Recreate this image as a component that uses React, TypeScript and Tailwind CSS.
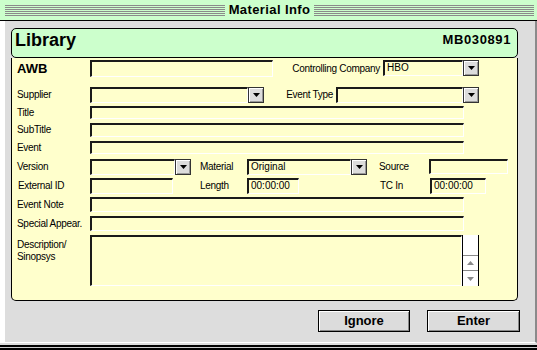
import React from 'react';

const inset =
  'border-t-2 border-l-2 border-t-[#1a1a1a] border-l-[#1a1a1a] border-b border-r border-b-white border-r-white bg-[#ffffcc]';

function Stripes() {
  return (
    <div className="flex h-[11px] flex-1 flex-col justify-between">
      <div className="h-px bg-[#8a8a8a]" />
      <div className="h-px bg-[#8a8a8a]" />
      <div className="h-px bg-[#8a8a8a]" />
      <div className="h-px bg-[#8a8a8a]" />
      <div className="h-px bg-[#8a8a8a]" />
      <div className="h-px bg-[#8a8a8a]" />
    </div>
  );
}

function DropButton() {
  return (
    <div className="flex h-[16px] w-[16px] shrink-0 items-center justify-center border border-[#333] bg-[#dcdcdc] shadow-[inset_1px_1px_0_#fff,inset_-1px_-1px_0_#999]">
      <svg width="7" height="4" viewBox="0 0 7 4">
        <polygon points="0,0 7,0 3.5,4" fill="#000" />
      </svg>
    </div>
  );
}

function Select({ className, value = '' }: { className: string; value?: string }) {
  return (
    <div className={`flex items-start ${className}`}>
      <div className={`h-[16px] flex-1 pl-[2px] text-[10px] leading-[12px] ${inset}`}>{value}</div>
      <DropButton />
    </div>
  );
}

function Field({ className, value = '' }: { className: string; value?: string }) {
  return <div className={`pl-[2px] text-[10px] leading-[12px] ${inset} ${className}`}>{value}</div>;
}

function Label({ children, className = '' }: { children: React.ReactNode; className?: string }) {
  return <div className={`shrink-0 text-[10px] leading-[12px] tracking-[-0.3px] ${className}`}>{children}</div>;
}

function FullRow({ label, mt, h }: { label: string; mt: string; h: string }) {
  return (
    <div className={`flex items-center ${mt} ${h}`}>
      <Label className="w-[78px] pl-[5px]">{label}</Label>
      <Field className={`w-[374px] ${h}`} />
    </div>
  );
}

export default function App() {
  return (
    <div className="flex h-[350px] w-[537px] flex-col bg-[#dddddd] font-['Liberation_Sans',Arial,sans-serif] text-black">
      {/* title bar */}
      <div className="flex h-[21px] shrink-0 items-center gap-[4px] border-b border-black bg-[#ccffcc] pl-[5px] pr-[3px]">
        <Stripes />
        <span className="text-[13px] font-bold tracking-[0.4px]">Material Info</span>
        <Stripes />
      </div>

      <div className="flex flex-1 flex-col border-b border-l-[5px] border-r-2 border-b-white border-l-white border-r-[#8a8a8a] pt-[7px] pr-[15px] pl-[6px]">
        <div className="w-[507px]">
          <div className="flex h-[30px] items-start justify-between rounded-[5px] border border-black bg-[#ccffcc] pl-[3px] pr-[6px]">
            <span className="mt-[-1px] text-[18px] font-bold leading-[24px]">Library</span>
            <span className="mt-[3px] text-[13px] font-bold leading-[16px] tracking-[0.6px]">MB030891</span>
          </div>

          <div className="flex h-[243px] flex-col rounded-b-[5px] border-x border-b border-black bg-[#ffffcc]">
            {/* AWB */}
            <div className="mt-[2px] flex h-[17px] items-center">
              <Label className="w-[78px] pl-[5px] text-[13px] font-bold tracking-[0px]">AWB</Label>
              <Field className="h-[17px] w-[183px]" />
              <Label className="w-[110px] pr-[3px] text-right">Controlling Company</Label>
              <Select className="h-[17px] w-[96px]" value="HBO" />
            </div>

            {/* Supplier */}
            <div className="mt-[10px] flex h-[16px] items-center">
              <Label className="w-[78px] pl-[5px]">Supplier</Label>
              <Select className="h-[16px] w-[174px]" />
              <Label className="w-[72px] pr-[3px] text-right">Event Type</Label>
              <Select className="h-[16px] w-[143px]" />
            </div>

            <FullRow label="Title" mt="mt-[3px]" h="h-[13px]" />
            <FullRow label="SubTitle" mt="mt-[4px]" h="h-[14px]" />
            <FullRow label="Event" mt="mt-[4px]" h="h-[13px]" />

            {/* Version */}
            <div className="mt-[5px] flex h-[15px] items-center">
              <Label className="w-[78px] pl-[5px]">Version</Label>
              <Select className="h-[15px] w-[101px]" />
              <Label className="ml-[9px] w-[47px]">Material</Label>
              <Select className="h-[15px] w-[120px]" value="Original" />
              <Label className="ml-[12px] w-[50px]">Source</Label>
              <Field className="h-[15px] w-[79px]" />
            </div>

            {/* External ID */}
            <div className="mt-[4px] flex h-[16px] items-center">
              <Label className="w-[78px] pl-[6px]">External ID</Label>
              <Field className="h-[16px] w-[83px]" />
              <Label className="ml-[27px] w-[47px]">Length</Label>
              <Field className="h-[16px] w-[52px]" value="00:00:00" />
              <Label className="ml-[81px] w-[50px]">TC In</Label>
              <Field className="h-[16px] w-[56px]" value="00:00:00" />
            </div>

            <FullRow label="Event Note" mt="mt-[3px]" h="h-[15px]" />
            <FullRow label="Special Appear." mt="mt-[4px]" h="h-[15px]" />

            {/* Description */}
            <div className="mt-[4px] flex h-[51px] items-start">
              <Label className="w-[78px] pl-[5px] pt-[4px]">
                Description/
                <br />
                Sinopsys
              </Label>
              <div className={`h-[51px] w-[372px] ${inset}`} />
              <div className="flex h-[51px] w-[17px] flex-col border-x border-black bg-white">
                <div className="flex-1 border-b border-[#888]" />
                <div className="flex h-[15px] items-center justify-center border-b border-[#888]">
                  <svg width="7" height="4" viewBox="0 0 7 4">
                    <polygon points="3.5,0 7,4 0,4" fill="#888" />
                  </svg>
                </div>
                <div className="flex h-[15px] items-center justify-center">
                  <svg width="7" height="4" viewBox="0 0 7 4">
                    <polygon points="0,0 7,0 3.5,4" fill="#888" />
                  </svg>
                </div>
              </div>
            </div>
          </div>
        </div>

        <div className="mt-[9px] flex justify-end gap-[17px]">
          <button className="h-[22px] w-[92px] border border-black bg-[#dcdcdc] text-[13px] font-bold shadow-[inset_1px_1px_0_#fff,inset_-1px_-1px_0_#888]">
            Ignore
          </button>
          <button className="h-[22px] w-[93px] border border-black bg-[#dcdcdc] text-[13px] font-bold shadow-[inset_1px_1px_0_#fff,inset_-1px_-1px_0_#888]">
            Enter
          </button>
        </div>
      </div>

      <div className="h-[2px] shrink-0 bg-[#dddddd]" />
      <div className="h-[2px] shrink-0 bg-black" />
      <div className="h-px shrink-0 bg-[#cccccc]" />
      <div className="h-[2px] shrink-0 bg-black" />
    </div>
  );
}
